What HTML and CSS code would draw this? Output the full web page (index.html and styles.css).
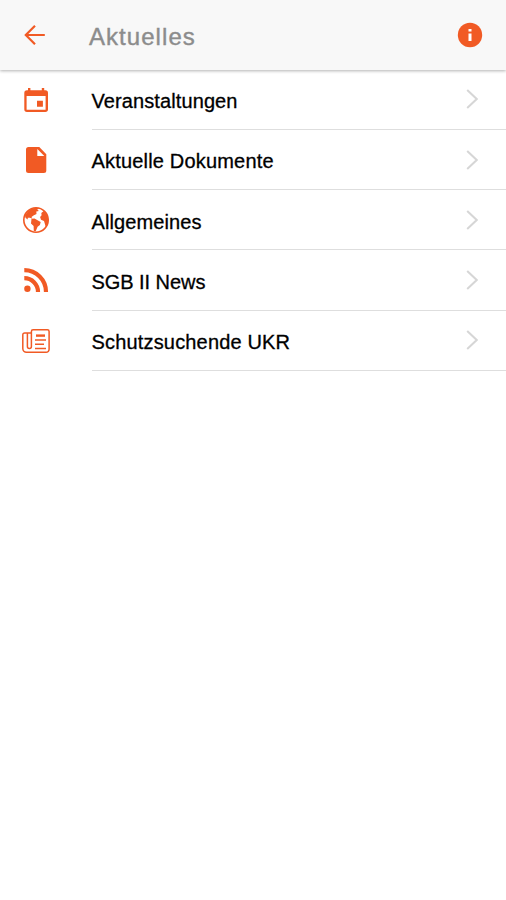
FILE: index.html
```html
<!DOCTYPE html>
<html lang="de">
<head>
<meta charset="utf-8">
<title>Aktuelles</title>
<link rel="stylesheet" href="styles.css">
</head>
<body>
<header class="bar">
  <svg class="icon" viewBox="0 0 32 32"><path class="line back" d="M25.8 16H6.8M16 6.800 6.800 16l9.200 9.200"/></svg>
  <h1 class="title">Aktuelles</h1>
  <svg class="icon" viewBox="0 0 32 32"><circle class="fill" cx="16" cy="16" r="12.2"/><path class="info" d="M14.500 9.900h3v2.600h-3zM14.500 14.400h3v7.600h-3z"/></svg>
</header>
<main class="list">
  <a class="row">
    <svg class="icon" viewBox="0 0 32 32"><path class="fill" fill-rule="evenodd" d="M8 4h2.4v2.2h11.4V4h2.4v2.2h1A2.7 2.7 0 0 1 28 8.9v16.4a2.7 2.7 0 0 1-2.7 2.7H7a2.7 2.7 0 0 1-2.7-2.7V8.900A2.700 2.700 0 0 1 7 6.200h1zM6.600 12v13.700h19V12zM17 16.800h5.900v5.900H17z"/></svg>
    <span class="content"><span class="label l1">Veranstaltungen</span><svg class="chevron" viewBox="0 0 12 20"><path d="M1.2 1 10.7 10 1.2 19"/></svg></span>
  </a>
  <a class="row">
    <svg class="icon" viewBox="0 0 32 32"><path class="fill" fill-rule="evenodd" d="M8.5 3h10.8l7 7.2v16.3a2.5 2.5 0 0 1-2.5 2.5H8.5A2.5 2.5 0 0 1 6 26.500V5.500A2.500 2.500 0 0 1 8.500 3zM17.300 5v7h7z"/></svg>
    <span class="content"><span class="label l2">Aktuelle Dokumente</span><svg class="chevron" viewBox="0 0 12 20"><path d="M1.2 1 10.7 10 1.2 19"/></svg></span>
  </a>
  <a class="row">
    <svg class="icon" viewBox="0 0 32 32"><circle class="line globe" cx="16" cy="16" r="12.200"/><path class="fill" d="M6.500 9.300C8.700 6 12 4 16 3.800l3.500.7-2.300 1.100 1.700 1.500-2.600.5.200 2.400-2.600 1.300-2.400 1.800.7 1.500-2.400-.9-2.100.1.100 1.600-2.200-1.300-.700-2.500zM11.500 14.800l3-.4 3.500 2.200 2.700 1.400-.8 3-2.300 1.700-1.900 4.600-1.900-.4-.2-4.800-2.600-2.700zM21.300 9l2.400-2 3.300 3.400 1.500 5.200-1 5.300-1.700 2.400-.9-3.200-.9-3-3-1.300-.9-2.800 1.500-1.800z"/></svg>
    <span class="content"><span class="label l3">Allgemeines</span><svg class="chevron" viewBox="0 0 12 20"><path d="M1.2 1 10.7 10 1.2 19"/></svg></span>
  </a>
  <a class="row">
    <svg class="icon" viewBox="0 0 32 32"><circle class="fill" cx="7.400" cy="24.700" r="3.200"/><path class="line rss" d="M4.300 14.200A13.700 13.700 0 0 1 18 27.900M4.300 6.200A21.700 21.700 0 0 1 26 27.900"/></svg>
    <span class="content"><span class="label l4">SGB II News</span><svg class="chevron" viewBox="0 0 12 20"><path d="M1.2 1 10.7 10 1.2 19"/></svg></span>
  </a>
  <a class="row">
    <svg class="icon" viewBox="0 0 32 32"><path class="line news" d="M11.400 6.500c0-1 .7-1.700 1.700-1.700h14.300c1 0 1.700.7 1.700 1.700v17.800a3 3 0 0 1-3 3H6.500a3.700 3.700 0 0 1-3.700-3.700V9.900c0-1.200.7-1.900 1.900-1.900h6.700zM11.400 8v13.600a2 2 0 0 1-4 0V8"/><path class="line news" d="M15 15h11M15 19.200h9M15 23.400h11"/><path class="line headline" d="M16 10.600h9"/></svg>
    <span class="content"><span class="label l5">Schutzsuchende UKR</span><svg class="chevron" viewBox="0 0 12 20"><path d="M1.2 1 10.7 10 1.2 19"/></svg></span>
  </a>
</main>
</body>
</html>
```
FILE: styles.css
```css
* { box-sizing: border-box; }
body {
  margin: 0;
  min-height: 900px;
  background: #fff;
  font-family: "Liberation Sans", Arial, sans-serif;
}
.bar {
  display: flex;
  align-items: center;
  height: 69.75px;
  padding: 0 20px 0 19px;
  background: #f8f8f8;
  box-shadow: 0 1px 3px rgba(0, 0, 0, .3);
}
.icon { display: block; flex: none; width: 32px; height: 32px; }
.title {
  flex: 1;
  margin: 4px 0 0 38px;
  font-size: 24px;
  line-height: 28px;
  font-weight: 400;
  letter-spacing: 1.05px;
  color: #8c8c8c;
  -webkit-text-stroke: .4px #8c8c8c;
}
.fill { fill: #f15a24; }
.info { fill: #fff; }
.line { fill: none; stroke: #f15a24; }
.back { stroke-width: 2.2; }
.globe { stroke-width: 1.6; }
.rss { stroke-width: 4.2; }
.news { stroke-width: 1.5; }
.headline { stroke-width: 2.4; }
.row {
  display: flex;
  align-items: center;
  height: 60.2px;
  padding-left: 20px;
}
.content {
  display: flex;
  flex: 1;
  align-items: center;
  justify-content: space-between;
  height: 100%;
  margin-left: 39.5px;
  padding-right: 28px;
  border-bottom: 1px solid #dedede;
}
.label {
  padding-top: 3.8px;
  font-size: 20px;
  line-height: 24px;
  white-space: nowrap;
  color: #000;
  -webkit-text-stroke: .3px #000;
}
.l1 { letter-spacing: .1px; }
.l2 { letter-spacing: .18px; }
.l3 { letter-spacing: .1px; }
.l4 { letter-spacing: -.05px; }
.l5 { letter-spacing: .17px; }
.chevron { width: 12px; height: 20px; fill: none; stroke: #d6d6d6; stroke-width: 2; }
```
